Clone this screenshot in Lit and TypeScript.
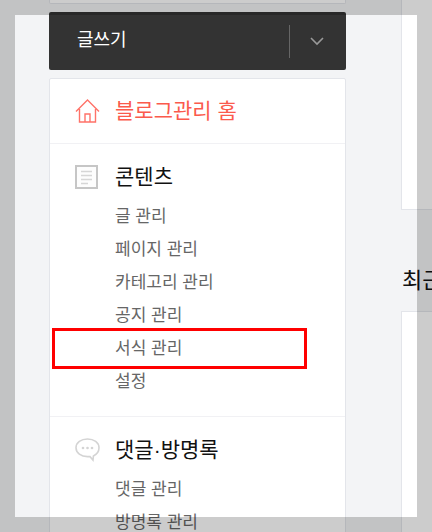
import { LitElement, html, css } from "lit";
import { customElement } from "lit/decorators.js";

@customElement("app-root")
export class AppRoot extends LitElement {
  static styles = css`
    :host { display: block; width: 432px; height: 532px; overflow: hidden; position: relative; background: #f3f4f6;
      font-family: "Liberation Sans", "Noto Sans CJK KR", sans-serif; }
    .page { display: flex; align-items: flex-start; height: 532px; overflow: hidden; }
    .side { width: 297px; margin-left: 49px; flex: none; display: flex; flex-direction: column; }
    .stub { height: 4px; box-sizing: border-box; background: #fff; border: 1px solid #e3e5ea; border-top: none; border-radius: 0 0 2px 2px; margin-bottom: 8px; }
    .write { height: 58px; background: #333; border-radius: 2px; display: flex; align-items: center; color: #fff; margin-bottom: 8px; }
    .write .label { flex: 1; padding-left: 28px; font-size: 18px; line-height: 24px; margin-top: -3px; }
    .write .sep { width: 1px; height: 33px; background: #666; }
    .write .chev { width: 56px; box-sizing: border-box; padding-right: 2px; display: flex; justify-content: center; }
    .nav { background: #fff; border: 1px solid #e3e5ea; border-radius: 2px 2px 0 0; }
    .home { height: 64px; display: flex; align-items: center; padding-left: 25px; gap: 15px; color: #fb5a4c; font-size: 21px; border-bottom: 1px solid #f1f1f4; }
    .home span { margin-top: -4px; }
    .group { padding: 21px 0 18px; border-bottom: 1px solid #f1f1f4; }
    .group:last-child { border-bottom: none; }
    .head { display: flex; align-items: center; height: 24px; padding-left: 25px; gap: 15px; font-size: 21px; line-height: 24px; color: #111; margin-bottom: 11px; }
    .icon { width: 25px; flex: none; display: block; }
    ul { list-style: none; margin: 0; padding: 0 0 0 65px; }
    li { height: 33px; line-height: 33px; font-size: 17px; color: #666; white-space: nowrap; }
    .main { margin-left: 55px; width: 300px; flex: none; display: flex; flex-direction: column; }
    .card1 { height: 210px; box-sizing: border-box; background: #fff; border: 1px solid #e3e5ea; border-top: none; }
    .title { height: 101px; display: flex; align-items: center; padding-left: 1px; font-size: 22px; color: #111; padding-top: 34px; box-sizing: border-box; white-space: nowrap; }
    .card2 { height: 300px; background: #fff; border: 1px solid #e3e5ea; border-bottom: none; }
    .dim { position: absolute; left: 15px; top: 15px; width: 402px; height: 502px; box-shadow: 0 0 0 600px rgba(0, 0, 0, 0.2); pointer-events: none; }
    .mark { position: absolute; left: 52px; top: 328px; width: 255px; height: 41px; box-sizing: border-box; border: 3px solid #f00; pointer-events: none; }
  `;

  render() {
    return html`
      <div class="page">
        <div class="side">
          <div class="stub"></div>
          <div class="write">
            <span class="label">글쓰기</span>
            <span class="sep"></span>
            <span class="chev">
              <svg width="14" height="9" viewBox="0 0 14 9" fill="none" stroke="#999" stroke-width="1.6"><path d="M1 1l6 6 6-6"/></svg>
            </span>
          </div>
          <div class="nav">
            <div class="home">
              <svg class="icon" height="26" viewBox="0 0 25 26" fill="none" stroke="#ff7268" stroke-width="1.4">
                <path d="M1 13.5 12.5 2 24 13.5M4.5 11v13h16V11M10 24v-8h5v8"/>
              </svg>
              <span>블로그관리 홈</span>
            </div>
            <div class="group">
              <div class="head">
                <svg class="icon" height="24" viewBox="0 0 25 24" fill="none">
                  <rect x="1" y="1" width="21" height="22" stroke="#c6c6c6" stroke-width="2" fill="#fdfdfd"/>
                  <path d="M6 6.5h11M6 10.5h11M6 14.5h11M6 18.5h7" stroke="#d6d6d6" stroke-width="1.6"/>
                </svg>
                <span>콘텐츠</span>
              </div>
              <ul>
                <li>글 관리</li>
                <li>페이지 관리</li>
                <li>카테고리 관리</li>
                <li>공지 관리</li>
                <li>서식 관리</li>
                <li>설정</li>
              </ul>
            </div>
            <div class="group">
              <div class="head">
                <svg class="icon" height="24" viewBox="0 0 25 24" fill="none">
                  <path d="M12.5 1C6 1 1 4.6 1 9.8s5 8.8 11.5 8.8h2.5l3 3.4.4-4C21.8 16.4 24 13.400 24 9.800 24 4.600 19 1 12.500 1z" stroke="#d4d4d4" stroke-width="1.6"/>
                  <circle cx="8" cy="10" r="1.300" fill="#d4d4d4"/><circle cx="12.500" cy="10" r="1.300" fill="#d4d4d4"/><circle cx="17" cy="10" r="1.300" fill="#d4d4d4"/>
                </svg>
                <span>댓글·방명록</span>
              </div>
              <ul>
                <li>댓글 관리</li>
                <li>방명록 관리</li>
              </ul>
            </div>
          </div>
        </div>
        <div class="main">
          <div class="card1"></div>
          <div class="title">최근 글</div>
          <div class="card2"></div>
        </div>
      </div>
      <div class="dim"></div>
      <div class="mark"></div>
    `;
  }
}
